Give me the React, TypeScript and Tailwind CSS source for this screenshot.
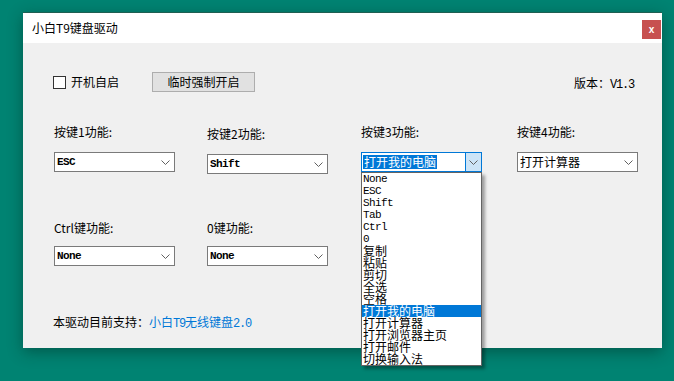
import React from 'react';

const cjk = { fontFamily: '"Noto Sans CJK SC", "Liberation Sans", sans-serif' };
const mono = { fontFamily: '"Liberation Mono", "Noto Sans CJK SC", monospace' };

const options = [
  'None',
  'ESC',
  'Shift',
  'Tab',
  'Ctrl',
  '0',
  '复制',
  '粘贴',
  '剪切',
  '全选',
  '空格',
  '打开我的电脑',
  '打开计算器',
  '打开浏览器主页',
  '打开邮件',
  '切换输入法',
];

function Chevron() {
  return (
    <svg width="9" height="5" viewBox="0 0 9 5" className="shrink-0">
      <path d="M0.5 0.5 L4.5 4.5 L8.5 0.5" fill="none" stroke="#606060" strokeWidth="1" />
    </svg>
  );
}

function Combo({ value, ascii }: { value: string; ascii?: boolean }) {
  return (
    <div className="flex h-[20px] w-[121px] items-center justify-between border border-[#7a7a7a] bg-white pl-[2px] pr-[4px]">
      {ascii ? (
        <span className="text-[11px] font-bold tracking-[-0.6px] text-black" style={mono}>
          {value}
        </span>
      ) : (
        <span className="text-[12px] leading-[14px] text-black" style={cjk}>
          {value}
        </span>
      )}
      <Chevron />
    </div>
  );
}

function Label({ children }: { children: React.ReactNode }) {
  return (
    <div className="h-[16px] text-[12px] leading-[16px] text-black" style={cjk}>
      {children}
    </div>
  );
}

export default function App() {
  return (
    <div className="h-[381px] w-[674px] overflow-hidden bg-[#008372] pl-[23px] pt-[12px]">
      <div className="flex h-[336px] w-[639px] flex-col border-t border-[#1f5f52] bg-[#f0f0f0] shadow-[0_4px_14px_rgba(0,40,30,0.45)]">
        {/* title bar */}
        <div className="flex h-[30px] items-start justify-between bg-white pl-[9px] pr-[1px]">
          <span className="mt-[7px] text-[12px] leading-[16px] text-black" style={cjk}>
            小白T9键盘驱动
          </span>
          <div className="mt-[7px] flex h-[19px] w-[19px] items-center justify-center bg-[#c75050] text-[10px] font-bold leading-none text-white" style={{ fontFamily: '"Liberation Sans", sans-serif' }}>
            x
          </div>
        </div>

        {/* body */}
        <div className="relative flex-1 pl-[30px] pr-[28px]">
          <div className="mt-[29px] flex h-[20px] items-center">
            <div className="h-[13px] w-[13px] border border-[#333] bg-white" />
            <span className="ml-[5px] text-[12px] leading-[16px] text-black" style={cjk}>
              开机自启
            </span>
            <div className="ml-[33px] flex h-[20px] w-[103px] items-center justify-center border border-[#adadad] bg-[#e1e1e1] text-[12px] text-black" style={cjk}>
              临时强制开启
            </div>
            <div className="ml-auto mt-[4px] text-[12px] text-black" style={cjk}>
              版本：<span className="tracking-[-1.2px]" style={mono}>V1.3</span>
            </div>
          </div>

          <div className="mt-[32px] grid grid-cols-[153px_154px_156px_121px] pl-[1px]">
            <div className="flex flex-col">
              <Label>按键1功能:</Label>
              <div className="mt-[12px]"><Combo value="ESC" ascii /></div>
            </div>
            <div className="mt-[2px] flex flex-col">
              <Label>按键2功能:</Label>
              <div className="mt-[12px]"><Combo value="Shift" ascii /></div>
            </div>
            <div className="flex flex-col">
              <Label>按键3功能:</Label>
              <div className="relative mt-[12px]">
                <div className="flex h-[20px] w-[121px] items-stretch border border-[#0078d7] bg-white">
                  <div className="flex flex-1 items-center pl-[1px]">
                    <span className="bg-[#0078d7] px-[1px] text-[12px] leading-[14px] text-white" style={cjk}>
                      打开我的电脑
                    </span>
                  </div>
                  <div className="flex w-[16px] items-center justify-center border-l border-[#0078d7] bg-[#cce4f7]">
                    <Chevron />
                  </div>
                </div>
                {/* open dropdown list */}
                <div className="absolute left-0 top-[20px] z-10 w-[121px] border border-[#646464] bg-white shadow-[3px_3px_3px_rgba(0,0,0,0.35)]">
                  {options.map((o) => {
                    const active = o === '打开我的电脑';
                    const isAscii = /^[A-Za-z0-9]+$/.test(o);
                    return (
                      <div
                        key={o}
                        className={
                          active
                            ? 'h-[12px] overflow-visible bg-[#0078d7] pl-[1px] text-[12px] leading-[12px] text-white'
                            : 'h-[12px] overflow-visible pl-[1px] text-[12px] leading-[12px] text-black'
                        }
                        style={isAscii ? mono : cjk}
                      >
                        {isAscii ? <span className="text-[11px] tracking-[-0.6px]">{o}</span> : o}
                      </div>
                    );
                  })}
                </div>
              </div>
            </div>
            <div className="flex flex-col">
              <Label>按键4功能:</Label>
              <div className="mt-[12px]"><Combo value="打开计算器" /></div>
            </div>
          </div>

          <div className="mt-[46px] grid grid-cols-[153px_154px] pl-[1px]">
            <div className="flex flex-col">
              <Label>Ctrl键功能:</Label>
              <div className="mt-[10px]"><Combo value="None" ascii /></div>
            </div>
            <div className="flex flex-col">
              <Label>0键功能:</Label>
              <div className="mt-[10px]"><Combo value="None" ascii /></div>
            </div>
          </div>

          <div className="mt-[48px] text-[12px] leading-[16px] text-black" style={cjk}>
            本驱动目前支持：
            <span className="text-[#0078d7]">
              小白<span className="tracking-[-1.2px]" style={mono}>T9</span>无线键盘<span className="tracking-[-1.2px]" style={mono}>2.0</span>
            </span>
          </div>
        </div>
      </div>
    </div>
  );
}
